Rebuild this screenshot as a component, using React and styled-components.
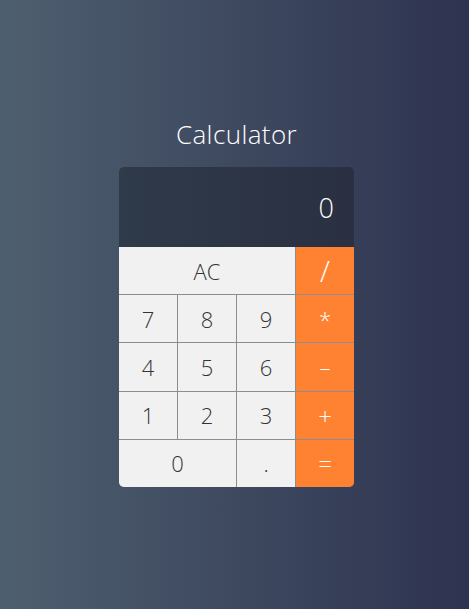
import React, { useState } from "react";
import styled, { createGlobalStyle } from "styled-components";

const Global = createGlobalStyle`
  html, body { margin: 0; padding: 0; }
  body {
    font-family: "Open Sans", "Liberation Sans", sans-serif;
    background: linear-gradient(to right, #4e5f6f, #2e3350);
    min-height: 100vh;
  }
`;

const Page = styled.div`
  min-height: 100vh;
  box-sizing: border-box;
  display: flex;
  flex-direction: column;
  align-items: center;
  justify-content: center;
  padding-left: 4px;
`;

const Title = styled.h1`
  margin: 0 0 21px;
  font-size: 26px;
  line-height: 24px;
  font-weight: 300;
  color: #ffffff;
  letter-spacing: 0.4px;
`;

const Card = styled.div`
  width: 235px;
  border-radius: 5px;
  overflow: hidden;
`;

const Display = styled.div`
  height: 80px;
  box-sizing: border-box;
  padding: 0 20px;
  display: flex;
  align-items: center;
  justify-content: flex-end;
  background: linear-gradient(to right, #2f3a4a, #2a3041);
  color: #ffffff;
  font-size: 27px;
  font-weight: 300;
`;

const Keys = styled.div`
  display: grid;
  grid-template-columns: repeat(4, 1fr);
  grid-template-rows: repeat(5, 1fr);
  gap: 1px;
  height: 240px;
  background: #8d8d8d;
`;

const Key = styled.button`
  grid-column: span ${(p) => p.$span || 1};
  border: none;
  margin: 0;
  padding: 0;
  font-family: inherit;
  font-size: ${(p) => p.$size || "22px"};
  font-weight: 300;
  background: ${(p) => (p.$op ? "#fe8231" : "#f1f1f1")};
  color: ${(p) => (p.$op ? "#ffffff" : "#333333")};
  cursor: pointer;
  display: flex;
  align-items: center;
  justify-content: center;
`;

const keys = [
  { l: "AC", span: 3 },
  { l: "/", op: true, size: "29px" },
  { l: "7" }, { l: "8" }, { l: "9" }, { l: "*", op: true },
  { l: "4" }, { l: "5" }, { l: "6" }, { l: "–", op: true },
  { l: "1" }, { l: "2" }, { l: "3" }, { l: "+", op: true, size: "24px" },
  { l: "0", span: 2 }, { l: "." }, { l: "=", op: true, size: "24px" },
];

export default function App() {
  const [value] = useState("0");
  return (
    <>
      <Global />
      <Page>
        <Title>Calculator</Title>
        <Card>
          <Display>{value}</Display>
          <Keys>
            {keys.map((k) => (
              <Key key={k.l} $span={k.span} $op={k.op} $size={k.size}>
                {k.l}
              </Key>
            ))}
          </Keys>
        </Card>
      </Page>
    </>
  );
}
